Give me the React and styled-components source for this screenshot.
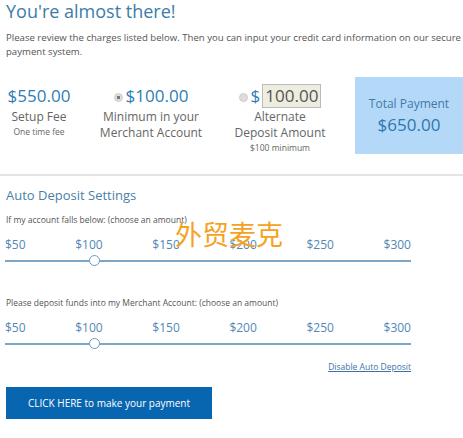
import styled, { createGlobalStyle } from 'styled-components'

const GlobalStyle = createGlobalStyle`
    body {
        margin: 0;
        background: #fff;
        font-family: "Open Sans", "Liberation Sans", sans-serif;
    }
`

const Page = styled.div`
    position: relative;
    width: 463px;
    height: 438px;
    overflow: hidden;
`

const Title = styled.h1`
    margin: 0;
    padding: 0 0 0 6px;
    font-size: 18px;
    font-weight: 400;
    line-height: 22px;
    color: #3b7da8;
`

const Intro = styled.p`
    margin: 9px 0 0;
    padding-left: 6px;
    font-size: 9.6px;
    line-height: 14px;
    color: #555;
    white-space: nowrap;
`

const FeeRow = styled.div`
    display: flex;
    align-items: flex-start;
    margin-top: 19px;
    padding-left: 4px;
`

const FeeCol = styled.div`
    width: ${props => props.width}px;
    margin-right: ${props => props.gap}px;
    margin-top: 5px;
    text-align: center;
    color: #666;
`

const Amount = styled.div`
    display: flex;
    align-items: center;
    justify-content: center;
    font-size: 17px;
    line-height: 26px;
    color: #2e7db5;
`

const Radio = styled.span`
    width: 7px;
    height: 7px;
    border-radius: 50%;
    margin-right: 3px;
    margin-top: 2px;
    background: ${props => props.checked ? 'radial-gradient(circle, #777 0 1.5px, #ddd 2px)' : '#ddd'};
    border: 1px solid #ccc;
`

const AmountInput = styled.span`
    display: inline-block;
    margin-left: 2px;
    padding: 0 2px;
    background: #efece0;
    border: 1px solid #bbb;
    color: #555;
    font-size: 17px;
    line-height: 22px;
`

const Label = styled.div`
    font-size: 12px;
    line-height: 16px;
`

const Small = styled.div`
    font-size: 8.5px;
    line-height: 14px;
`

const TotalBox = styled.div`
    flex: 1;
    height: 77px;
    margin-top: -1px;
    background: #b4d8f7;
    display: flex;
    flex-direction: column;
    align-items: center;
    justify-content: center;
    color: #3f7ba8;
`

const TotalLabel = styled.div`
    font-size: 12px;
    line-height: 16px;
    margin-top: 3px;
`

const TotalAmount = styled.div`
    font-size: 17px;
    line-height: 26px;
    color: #2c77ad;
`

const Rule = styled.hr`
    margin: 19px 0 0;
    border: none;
    border-top: 2px solid #e4e4e4;
`

const Section = styled.section`
    padding: 0 52px 0 5px;
`

const SectionTitle = styled.h2`
    margin: 10px 0 0 1px;
    font-size: 13px;
    font-weight: 400;
    line-height: 18px;
    color: #4a80a8;
`

const Prompt = styled.div`
    margin: ${props => props.top}px 0 0 1px;
    font-size: 8.5px;
    line-height: 12px;
    color: #555;
`

const Ticks = styled.div`
    display: flex;
    justify-content: space-between;
    margin-top: 11px;
    font-size: 12px;
    line-height: 16px;
    color: #4f88b6;
`

const Track = styled.div`
    position: relative;
    height: 2px;
    margin-top: 7px;
    background: #7ca6c4;
`

const Handle = styled.span`
    position: absolute;
    top: -5px;
    left: ${props => props.at}px;
    width: 9px;
    height: 9px;
    border-radius: 50%;
    background: #fff;
    border: 1.5px solid #6b9bbf;
`

const LinkRow = styled.div`
    display: flex;
    justify-content: flex-end;
    margin-top: 16px;
`

const Link = styled.a`
    font-size: 8.5px;
    line-height: 12px;
    color: #3d73a8;
    text-decoration: underline;
`

const PayButton = styled.button`
    display: block;
    margin: 14px 0 0 6px;
    width: 206px;
    height: 32px;
    border: none;
    background: #0866b0;
    color: #fff;
    font-family: "Open Sans", "Liberation Sans", sans-serif;
    font-size: 10px;
`

const Watermark = styled.div`
    position: absolute;
    left: 175px;
    top: 217px;
    font-family: "Noto Sans CJK SC", sans-serif;
    font-size: 27px;
    line-height: 34px;
    color: #f6a21e;
`

const ticks = ['$50', '$100', '$150', '$200', '$250', '$300']

function Slider({ prompt, top }) {
    return (
        <>
            <Prompt top={top}>{prompt}</Prompt>
            <Ticks>{ticks.map(t => <span key={t}>{t}</span>)}</Ticks>
            <Track><Handle at={84} /></Track>
        </>
    )
}

function App() {
    return (
        <Page>
            <GlobalStyle />
            <Title>You're almost there!</Title>
            <Intro>
                Please review the charges listed below. Then you can input your credit card information on our secure
                <br />payment system.
            </Intro>
            <FeeRow>
                <FeeCol width={70} gap={22}>
                    <Amount>$550.00</Amount>
                    <Label>Setup Fee</Label>
                    <Small>One time fee</Small>
                </FeeCol>
                <FeeCol width={110} gap={20}>
                    <Amount><Radio checked />$100.00</Amount>
                    <Label>Minimum in your</Label>
                    <Label>Merchant Account</Label>
                </FeeCol>
                <FeeCol width={108} gap={21}>
                    <Amount><Radio />$<AmountInput>100.00</AmountInput></Amount>
                    <Label>Alternate</Label>
                    <Label>Deposit Amount</Label>
                    <Small>$100 minimum</Small>
                </FeeCol>
                <TotalBox>
                    <TotalLabel>Total Payment</TotalLabel>
                    <TotalAmount>$650.00</TotalAmount>
                </TotalBox>
            </FeeRow>
            <Rule />
            <Section>
                <SectionTitle>Auto Deposit Settings</SectionTitle>
                <Slider top={10} prompt="If my account falls below: (choose an amount)" />
                <Slider top={35} prompt="Please deposit funds into my Merchant Account: (choose an amount)" />
                <LinkRow><Link href="#">Disable Auto Deposit</Link></LinkRow>
            </Section>
            <PayButton>CLICK HERE to make your payment</PayButton>
            <Watermark>外贸麦克</Watermark>
        </Page>
    )
}

export default App
